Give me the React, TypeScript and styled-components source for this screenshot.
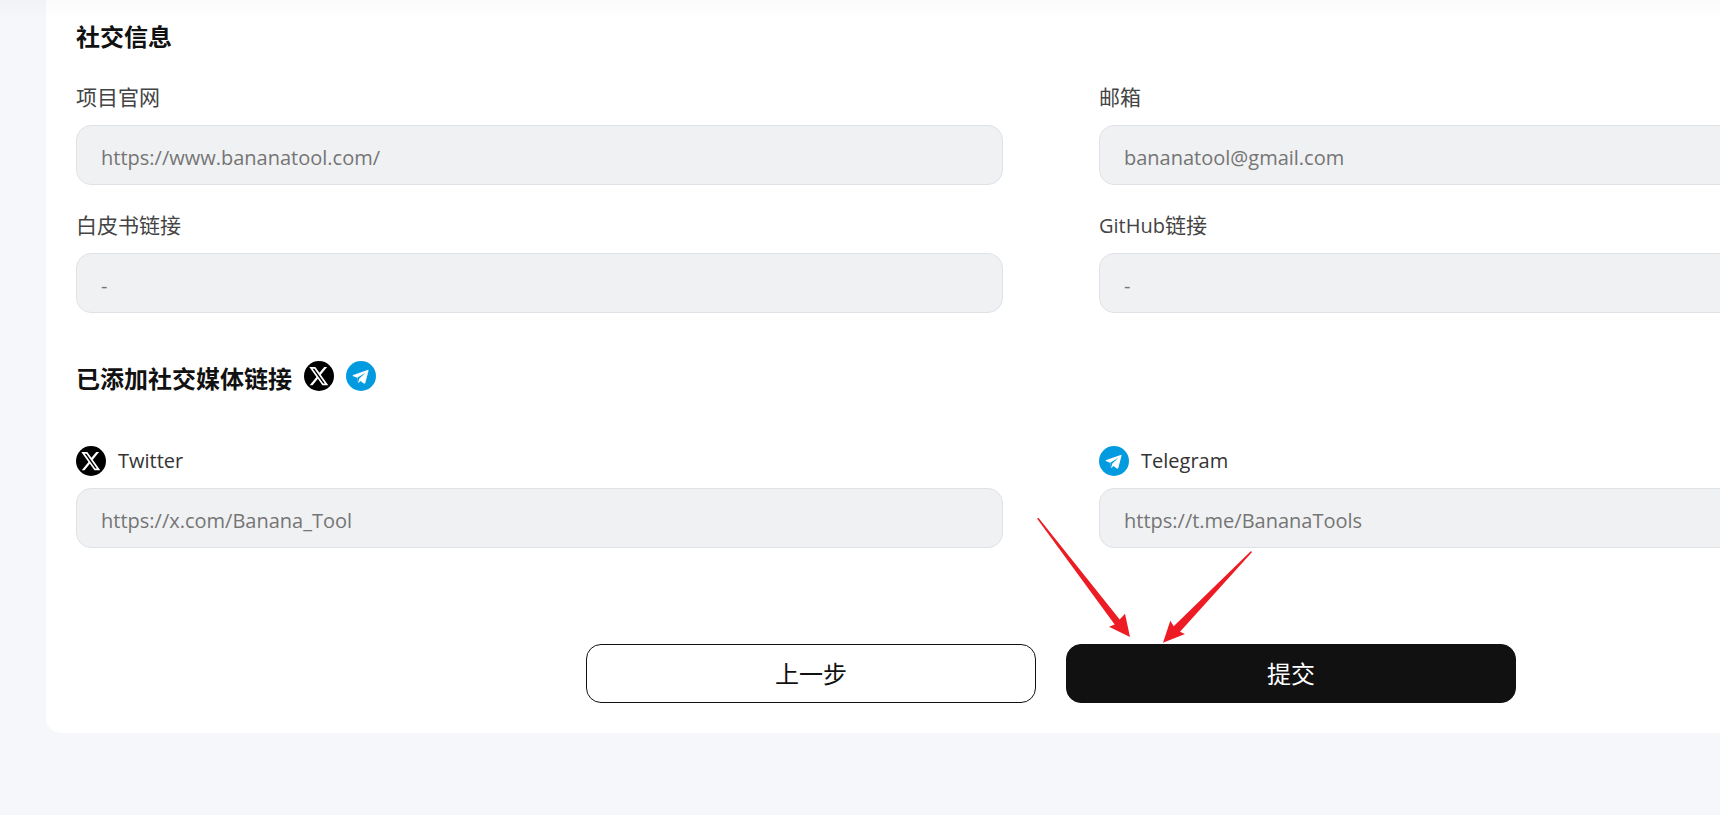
import React from "react";
import styled, { createGlobalStyle } from "styled-components";

const GlobalStyle = createGlobalStyle`
  *, *::before, *::after { box-sizing: border-box; }
  body {
    margin: 0;
    background: #f5f7fb;
    color: #111;
    font-family: "Open Sans", "Noto Sans CJK SC", sans-serif;
  }
`;

const Page = styled.main`
  position: relative;
  min-height: 100vh;
  overflow: hidden;
  padding: 0 0 80px 46px;
`;

const HeaderShade = styled.div`
  position: absolute;
  inset: 0 0 auto;
  height: 18px;
  background: linear-gradient(rgba(0, 0, 0, 0.02), rgba(0, 0, 0, 0));
  pointer-events: none;
`;

/* The card is wider than the viewport and runs off its right edge. */
const Card = styled.form`
  margin-right: -336px;
  padding: 19px 30px 30px;
  background: #fff;
  border-radius: 0 0 15px 15px;
`;

const Heading = styled.h2`
  margin: 0;
  font-size: 24px;
  line-height: 36px;
  font-weight: 700;
`;

const FieldGrid = styled.div`
  display: grid;
  grid-template-columns: 1fr 1fr;
  column-gap: 96px;
  row-gap: 24px;
  margin-top: 26px;
`;

const MediaHeader = styled.div`
  display: flex;
  align-items: flex-start;
  gap: 12px;
  margin-top: 48px;
  margin-bottom: 49px;
`;

const Field = styled.div`
  display: flex;
  flex-direction: column;
  gap: 12px;
`;

const Label = styled.label`
  font-size: 21px;
  line-height: 32px;
  color: #444;
`;

const Latin = styled.span`
  font-size: 20px;
  line-height: 20px;
`;

const IconLabel = styled.label`
  display: flex;
  align-items: center;
  gap: 12px;
  font-size: 20px;
  line-height: 30px;
  color: #333;
`;

const Input = styled.input`
  width: 100%;
  height: 60px;
  padding: 4px 24px 0;
  border: 1px solid #dee2e6;
  border-radius: 15px;
  background: #f0f1f3;
  font-family: inherit;
  font-size: 20px;
  &::placeholder { color: #757575; opacity: 1; }
`;

const Actions = styled.div`
  display: flex;
  justify-content: center;
  gap: 30px;
  margin-top: 96px;
`;

const Button = styled.button<{ $primary?: boolean }>`
  width: 450px;
  height: 59px;
  padding: 0 0 2px;
  border: 1px solid #111;
  border-radius: 15px;
  background: ${(p) => (p.$primary ? "#111" : "#fff")};
  color: ${(p) => (p.$primary ? "#fff" : "#111")};
  font-family: inherit;
  font-size: 24px;
`;

const SubmitSlot = styled.div`
  position: relative;
`;

const Arrows = styled.svg`
  position: absolute;
  left: -30px;
  top: -128px;
  pointer-events: none;
`;

const Icon = styled.svg`
  display: block;
  flex: none;
  width: 30px;
  height: 30px;
`;

const XIcon = () => (
  <Icon viewBox="0 0 30 30" aria-hidden="true">
    <circle cx="15" cy="15" r="15" fill="#000" />
    <path
      transform="translate(5.3 4.9) scale(0.79 0.85)"
      fill="#fff"
      d="M18.901 1.153h3.68l-8.04 9.19L24 22.846h-7.406l-5.8-7.584-6.638 7.584H.474l8.6-9.83L0 1.154h7.594l5.243 6.932ZM17.61 20.644h2.039L6.486 3.24H4.298Z"
    />
  </Icon>
);

const TelegramIcon = () => (
  <Icon viewBox="0 0 30 30" aria-hidden="true">
    <circle cx="15" cy="15" r="15" fill="#039be0" />
    <path
      fill="#fff"
      d="M7.2 14 21.6 8.9q1.1-.3.9.8L19.3 21.9q-.4 1.1-1.5.5L14.5 19.9 12.9 21.5q-.8.7-1-.5L11.3 16.8 7.2 15.3Q5.9 14.6 7.2 14Z"
    />
    <path fill="#039be0" d="M11.3 16.8 19.3 11.7 13.2 17.7 12.6 20.6 11.9 20.9Z" />
  </Icon>
);

type FieldProps = {
  id: string;
  placeholder: string;
  label: React.ReactNode;
  icon?: React.ReactNode;
};

const FormField = ({ id, placeholder, label, icon }: FieldProps) => (
  <Field>
    {icon ? (
      <IconLabel htmlFor={id}>
        {icon}
        {label}
      </IconLabel>
    ) : (
      <Label htmlFor={id}>{label}</Label>
    )}
    <Input id={id} placeholder={placeholder} readOnly />
  </Field>
);

export default function App() {
  return (
    <>
      <GlobalStyle />
      <Page>
        <Card onSubmit={(e) => e.preventDefault()}>
          <Heading>社交信息</Heading>
          <FieldGrid>
            <FormField id="website" label="项目官网" placeholder="https://www.bananatool.com/" />
            <FormField id="email" label="邮箱" placeholder="bananatool@gmail.com" />
            <FormField id="whitepaper" label="白皮书链接" placeholder="-" />
            <FormField id="github" label={<><Latin>GitHub</Latin>链接</>} placeholder="-" />
          </FieldGrid>
          <MediaHeader>
            <Heading>已添加社交媒体链接</Heading>
            <XIcon />
            <TelegramIcon />
          </MediaHeader>
          <FieldGrid>
            <FormField id="twitter" icon={<XIcon />} label="Twitter" placeholder="https://x.com/Banana_Tool" />
            <FormField id="telegram" icon={<TelegramIcon />} label="Telegram" placeholder="https://t.me/BananaTools" />
          </FieldGrid>
          <Actions>
            <Button type="button">上一步</Button>
            <SubmitSlot>
              <Button type="submit" $primary>提交</Button>
              <Arrows width="220" height="130" viewBox="0 0 220 130" aria-hidden="true">
                <path fill="#ed1c24" d="M1 2.5 2.6 2 83.7 103.5 89 97.7 94 121 73 110.7 78.7 108.5Z" />
                <path fill="#ed1c24" d="M215 35 215.9 36.3 144 115.7 149 118 127 126.7 134.3 104.7 137.7 110.3Z" />
              </Arrows>
            </SubmitSlot>
          </Actions>
        </Card>
        <HeaderShade />
      </Page>
    </>
  );
}
